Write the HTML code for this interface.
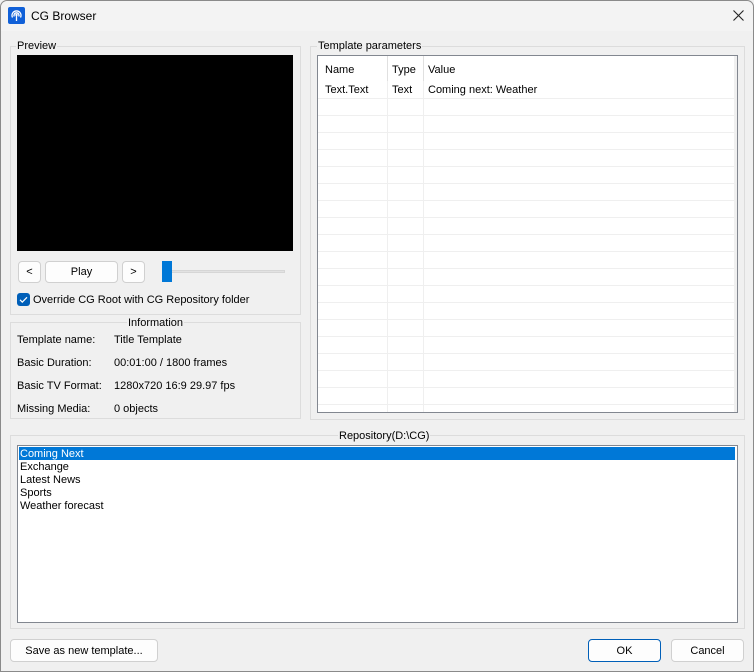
<!DOCTYPE html>
<html><head><style>
*{margin:0;padding:0;box-sizing:border-box}
body{width:754px;height:672px;background:#f0f0f0;font-family:"Liberation Sans",sans-serif;font-size:11px;color:#000;position:relative;overflow:hidden}
.a{position:absolute}
.grp{position:absolute;border:1px solid #dcdcdc}
.lbl{position:absolute;background:#f0f0f0;padding:0 1px;white-space:nowrap;line-height:13px}
.btn{position:absolute;background:#fdfdfd;border:1px solid #d0d0d0;border-radius:4px;text-align:center;font-size:11px}
.t{position:absolute;white-space:nowrap;line-height:13px}
</style></head><body>
<div class="a" style="left:0;top:0;width:754px;height:672px;border:1px solid #8a8a8a;border-radius:7px 7px 0 0"></div>
<div class="a" style="left:1px;top:1px;width:752px;height:30px;background:#f3f3f3;border-radius:7px 7px 0 0"></div>
<svg class="a" style="left:8px;top:7px" width="17" height="17" viewBox="0 0 17 17"><rect width="17" height="17" rx="2" fill="#1060d8"/><g fill="none" stroke="#fff" stroke-width="1.3"><path d="M4.5 10.5a4.5 4.5 0 1 1 8 0"/><path d="M6.3 9.5a2.5 2.5 0 1 1 4.4 0"/></g><circle cx="8.5" cy="8" r="1.2" fill="#fff"/><path d="M8.5 9v5" stroke="#fff" stroke-width="1.3"/></svg>
<div class="t" style="left:31px;top:10px;font-size:12px">CG Browser</div>
<svg class="a" style="left:733px;top:10px" width="11" height="11"><path d="M0.5 0.5L10.5 10.5M10.5 0.5L0.5 10.5" stroke="#222" stroke-width="1.1"/></svg>

<div class="grp" style="left:10px;top:46px;width:291px;height:269px"></div>
<div class="lbl" style="left:16px;top:40px;color:#000">Preview</div>
<div class="a" style="left:17px;top:55px;width:276px;height:196px;background:#000"></div>
<div class="btn" style="left:18px;top:261px;width:23px;height:22px;line-height:21px">&lt;</div>
<div class="btn" style="left:45px;top:261px;width:73px;height:22px;line-height:21px">Play</div>
<div class="btn" style="left:122px;top:261px;width:23px;height:22px;line-height:21px">&gt;</div>
<div class="a" style="left:165px;top:270px;width:120px;height:3px;background:#e2e2e2;border:1px solid #d6d6d6"></div>
<div class="a" style="left:162px;top:261px;width:10px;height:21px;background:#0078d7"></div>
<div class="a" style="left:17px;top:293px;width:13px;height:13px;background:#005fb8;border-radius:3px"></div>
<svg class="a" style="left:17px;top:293px" width="13" height="13"><path d="M3 6.8l2.3 2.3L10 4.3" stroke="#fff" stroke-width="1.2" fill="none"/></svg>
<div class="t" style="left:33px;top:294px">Override CG Root with CG Repository folder</div>

<div class="grp" style="left:10px;top:322px;width:291px;height:97px"></div>
<div class="lbl" style="left:127px;top:317px">Information</div>
<div class="t" style="left:17px;top:334px">Template name:</div><div class="t" style="left:114px;top:334px">Title Template</div>
<div class="t" style="left:17px;top:357px">Basic Duration:</div><div class="t" style="left:114px;top:357px">00:01:00 / 1800 frames</div>
<div class="t" style="left:17px;top:380px">Basic TV Format:</div><div class="t" style="left:114px;top:380px">1280x720 16:9 29.97 fps</div>
<div class="t" style="left:17px;top:403px">Missing Media:</div><div class="t" style="left:114px;top:403px">0 objects</div>

<div class="grp" style="left:310px;top:46px;width:435px;height:374px"></div>
<div class="lbl" style="left:317px;top:40px">Template parameters</div>
<div class="a" style="left:317px;top:55px;width:421px;height:358px;background:#fff;border:1px solid #828790;overflow:hidden">
 <div class="a" style="left:0;top:26px;width:416px;height:340px;background:repeating-linear-gradient(to bottom,transparent 0,transparent 16px,#efefef 16px,#efefef 17px)"></div>
 <div class="a" style="left:69px;top:0;width:1px;height:360px;background:#efefef"></div>
 <div class="a" style="left:105px;top:0;width:1px;height:360px;background:#efefef"></div>
 <div class="a" style="left:69px;top:0;width:1px;height:25px;background:#e0e0e0"></div>
 <div class="a" style="left:105px;top:0;width:1px;height:25px;background:#e0e0e0"></div>
 <div class="a" style="left:416px;top:0;width:4px;height:360px;background:#f0f0f0"></div>
 <div class="t" style="left:7px;top:8px">Name</div><div class="t" style="left:74px;top:8px">Type</div><div class="t" style="left:110px;top:8px">Value</div>
 <div class="t" style="left:7px;top:28px">Text.Text</div><div class="t" style="left:74px;top:28px">Text</div><div class="t" style="left:110px;top:28px">Coming next: Weather</div>
</div>

<div class="grp" style="left:10px;top:435px;width:735px;height:194px"></div>
<div class="lbl" style="left:338px;top:430px">Repository(D:\CG)</div>
<div class="a" style="left:17px;top:445px;width:721px;height:178px;background:#fff;border:1px solid #828790"></div>
<div class="a" style="left:19px;top:447px;width:716px;height:13px;background:#0078d7"></div>
<div class="t" style="left:20px;top:448px;color:#fff">Coming Next</div>
<div class="t" style="left:20px;top:461px">Exchange</div>
<div class="t" style="left:20px;top:474px">Latest News</div>
<div class="t" style="left:20px;top:487px">Sports</div>
<div class="t" style="left:20px;top:500px">Weather forecast</div>

<div class="btn" style="left:10px;top:639px;width:148px;height:23px;line-height:22px">Save as new template...</div>
<div class="btn" style="left:588px;top:639px;width:73px;height:23px;line-height:22px;border-color:#005fb8">OK</div>
<div class="btn" style="left:671px;top:639px;width:73px;height:23px;line-height:22px">Cancel</div>
</body></html>
